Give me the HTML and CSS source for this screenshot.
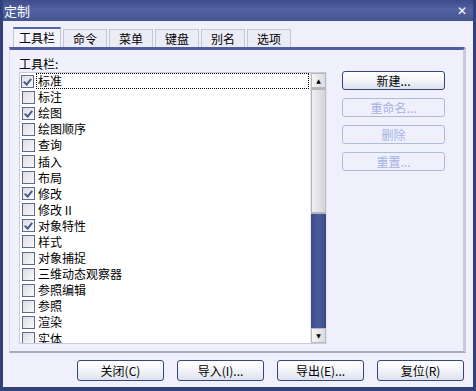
FILE: index.html
```html
<!DOCTYPE html>
<html lang="zh">
<head>
    <meta charset="UTF-8">
    <title>定制</title>
    <link rel="stylesheet" href="styles.css">
</head>
<body>
<div class="window">
    <div class="titlebar">
        <span class="title">定制</span>
        <span class="close">&#x2715;</span>
    </div>
    <div class="client">
        <div class="tabs">
            <div class="tab active">工具栏</div>
            <div class="tab">命令</div>
            <div class="tab">菜单</div>
            <div class="tab">键盘</div>
            <div class="tab">别名</div>
            <div class="tab">选项</div>
        </div>
        <div class="panel">
            <div class="left">
                <div class="label">工具栏:</div>
                <div class="listbox">
                    <div class="items">
                        <div class="item focus"><span class="check on"></span>标准</div>
                        <div class="item"><span class="check"></span>标注</div>
                        <div class="item"><span class="check on"></span>绘图</div>
                        <div class="item"><span class="check"></span>绘图顺序</div>
                        <div class="item"><span class="check"></span>查询</div>
                        <div class="item"><span class="check"></span>插入</div>
                        <div class="item"><span class="check"></span>布局</div>
                        <div class="item"><span class="check on"></span>修改</div>
                        <div class="item"><span class="check"></span>修改 II</div>
                        <div class="item"><span class="check on"></span>对象特性</div>
                        <div class="item"><span class="check"></span>样式</div>
                        <div class="item"><span class="check"></span>对象捕捉</div>
                        <div class="item"><span class="check"></span>三维动态观察器</div>
                        <div class="item"><span class="check"></span>参照编辑</div>
                        <div class="item"><span class="check"></span>参照</div>
                        <div class="item"><span class="check"></span>渲染</div>
                        <div class="item"><span class="check"></span>实体</div>
                    </div>
                    <div class="scrollbar">
                        <div class="arrow">&#x25B2;</div>
                        <div class="thumb"></div>
                        <div class="track"></div>
                        <div class="arrow">&#x25BC;</div>
                    </div>
                </div>
            </div>
            <div class="side">
                <div class="btn">新建...</div>
                <div class="btn disabled">重命名...</div>
                <div class="btn disabled">删除</div>
                <div class="btn disabled">重置...</div>
            </div>
        </div>
        <div class="footer">
            <div class="btn wide">关闭(C)</div>
            <div class="btn wide">导入(I)...</div>
            <div class="btn wide">导出(E)...</div>
            <div class="btn wide">复位(R)</div>
        </div>
    </div>
</div>
</body>
</html>
```

FILE: styles.css
```css
body {
    margin: 0;
    font-family: "Noto Sans CJK SC", "DejaVu Sans", sans-serif;
    font-size: 12px;
    color: #000;
}
.window {
    width: 476px;
    height: 391px;
    box-sizing: border-box;
    background: #33417a;
    padding: 0 3px 4px 3px;
    display: flex;
    flex-direction: column;
}
.titlebar {
    height: 21px;
    flex: none;
    display: flex;
    align-items: center;
    justify-content: space-between;
    padding: 0 6px 0 1px;
    background: linear-gradient(#3d4b8b, #5262a2 45%, #46558f);
    color: #fff;
}
.title {
    font-size: 13px;
    line-height: 13px;
}
.close {
    font-size: 12px;
    font-weight: bold;
    font-family: "DejaVu Sans", sans-serif;
}
.client {
    flex: 1;
    background: #f0f0fc;
    padding: 6px 7px 0 6px;
    display: flex;
    flex-direction: column;
}
.tabs {
    display: flex;
    height: 20px;
    padding-left: 4px;
    gap: 2px;
    align-items: flex-end;
}
.tab {
    height: 17px;
    padding: 0 9px;
    border: 1px solid #c4c8d4;
    border-bottom: none;
    background: #ececf6;
    line-height: 17px;
    font-size: 12px;
}
.tab.active {
    height: 18px;
    background: #f4f4fc;
    border-top: 2px solid #5462a6;
    padding: 0 5px;
    line-height: 18px;
}
.panel {
    height: 306px;
    box-sizing: border-box;
    border-top: 3px solid #4f5ea0;
    border-right: 3px solid #c8cad6;
    border-bottom: 2px solid #a8aab8;
    border-left: 1px solid #dcdce8;
    border-top-right-radius: 3px;
    display: flex;
    padding: 6px 0 0 9px;
}
.left {
    width: 308px;
}
.label {
    height: 15px;
    line-height: 15px;
    font-size: 12px;
}
.listbox {
    margin-top: 1px;
    height: 272px;
    box-sizing: border-box;
    border: 1px solid #c8ccd8;
    border-right-color: #e4e4ee;
    background: #fff;
    display: flex;
    overflow: hidden;
}
.items {
    flex: 1;
    padding: 0 0 0 2px;
}
.item {
    height: 16.1px;
    display: flex;
    align-items: center;
    font-size: 12px;
    line-height: 16px;
    white-space: nowrap;
}
.item.focus {
    outline: 1px dotted #000;
    outline-offset: -1px;
    margin-left: 14px;
    margin-right: 1px;
}
.item.focus .check {
    margin-left: -15px;
    margin-right: 4px;
}
.check {
    width: 11px;
    height: 11px;
    border: 1px solid #5c6a8c;
    background: linear-gradient(135deg, #dcdce4, #fafafc);
    margin-right: 3px;
    flex: none;
    position: relative;
}
.check.on::after {
    content: "";
    position: absolute;
    left: 3px;
    top: 1px;
    width: 3px;
    height: 6px;
    border: solid #4a5a8e;
    border-width: 0 2px 2px 0;
    transform: rotate(40deg);
}
.scrollbar {
    width: 15px;
    flex: none;
    display: flex;
    flex-direction: column;
    border-left: 1px solid #e8e8ee;
}
.arrow {
    height: 15px;
    box-sizing: border-box;
    border: 1px solid #b8b8c0;
    background: linear-gradient(90deg, #f4f4f6, #dcdce2);
    font-size: 6px;
    text-align: center;
    line-height: 13px;
    font-family: "DejaVu Sans", sans-serif;
}
.thumb {
    height: 126px;
    box-sizing: border-box;
    border-top: 2px solid #b4b4bc;
    border-bottom: 2px solid #b4b4bc;
    border-left: 1px solid #b4b4bc;
    border-right: 1px solid #c0c0c8;
    background: linear-gradient(90deg, #f0f0f2, #d4d4da);
}
.track {
    flex: 1;
    background: linear-gradient(90deg, #3e4c8c, #4a5a9c 50%, #3c4a88);
}
.side {
    margin-left: 15px;
    padding-top: 15px;
    display: flex;
    flex-direction: column;
    gap: 8px;
}
.btn {
    width: 103px;
    height: 19px;
    box-sizing: border-box;
    border: 1px solid #34467a;
    border-radius: 3px;
    background: linear-gradient(#ffffff, #f2f4f8 50%, #dde2ec);
    text-align: center;
    line-height: 17px;
    font-size: 12px;
}
.btn.disabled {
    border-color: #aebcdc;
    background: #f0f0fc;
    color: #a4b2e4;
}
.footer {
    display: flex;
    gap: 13px;
    padding: 7px 0 0 68px;
}
.btn.wide {
    width: 87px;
    height: 21px;
    line-height: 19px;
}
```
